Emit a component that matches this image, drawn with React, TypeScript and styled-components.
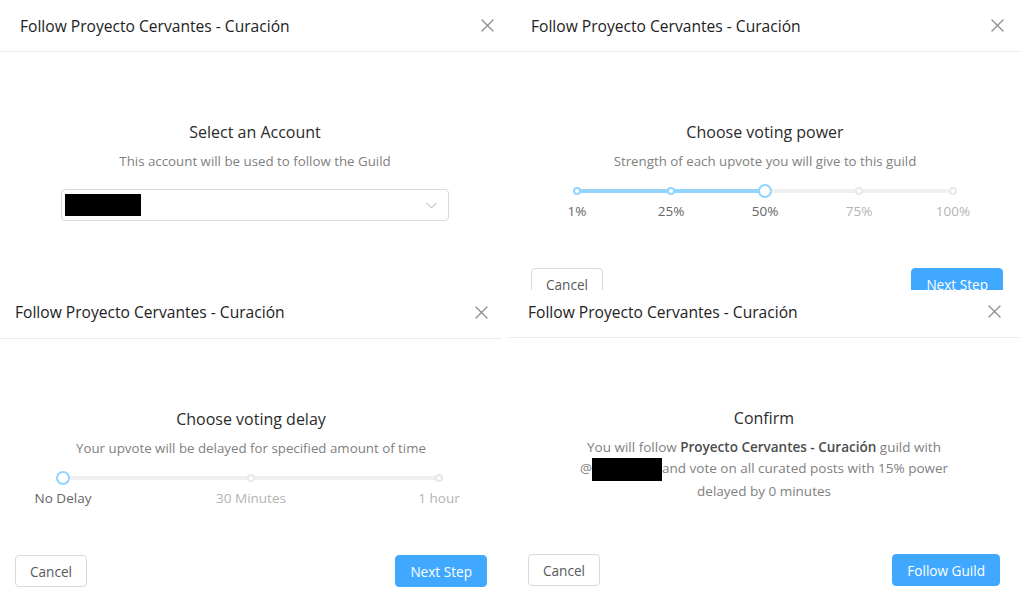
import React from "react"
import styled, { createGlobalStyle } from "styled-components"

const GlobalStyle = createGlobalStyle`
  html, body {
    margin: 0;
    padding: 0;
    background: #fff;
  }
  body {
    font-family: "Open Sans", "Liberation Sans", Arial, sans-serif;
    color: #262626;
    -webkit-font-smoothing: antialiased;
  }
`

// Layout
const Collage = styled.div`
  width: 1020px;
  height: 612px;
  display: flex;
  flex-direction: column;
  overflow: hidden;
  background: #fff;
`
const Row = styled.div<{ $height: number; $gap?: number }>`
  height: ${p => p.$height}px;
  display: flex;
  gap: ${p => p.$gap || 0}px;
  overflow: hidden;
`
const Panel = styled.section<{ $width: number }>`
  width: ${p => p.$width}px;
  flex: none;
  display: flex;
  flex-direction: column;
  background: #fff;
`
const Header = styled.header<{ $height: number; $left: number; $right: number; $lift?: number }>`
  height: ${p => p.$height}px;
  box-sizing: border-box;
  display: flex;
  align-items: center;
  justify-content: space-between;
  padding: 0 ${p => p.$right}px ${p => p.$lift || 0}px ${p => p.$left}px;
  border-bottom: 1px solid #ebebeb;
  flex: none;
`
const Title = styled.div`
  font-size: 15.6px;
  line-height: 22px;
  color: #222;
`
const Close = styled.button`
  width: 16px;
  height: 16px;
  padding: 0;
  border: 0;
  background: none;
  display: flex;
  align-items: center;
  justify-content: center;
  color: #8c8c8c;
  cursor: pointer;
`
const Body = styled.div`
  height: 216px;
  box-sizing: border-box;
  padding-top: 69px;
  display: flex;
  flex-direction: column;
  align-items: center;
  flex: none;
`
const Heading = styled.h3`
  margin: 0;
  font-size: 16px;
  line-height: 22px;
  font-weight: 500;
  color: #2b2b2b;
`
const Sub = styled.p`
  margin: 8px 0 0;
  font-size: 13.3px;
  line-height: 20px;
  color: #7f7f7f;
`
const ConfirmText = styled.p`
  margin: 8px 0 0;
  font-size: 13.5px;
  line-height: 21px;
  color: #7f7f7f;
  text-align: center;
  b { color: #4d4d4d; font-weight: 600; }
`
const Redacted = styled.span<{ $w: number; $h: number }>`
  display: inline-block;
  width: ${p => p.$w}px;
  height: ${p => p.$h}px;
  background: #000;
  vertical-align: middle;
`
const Select = styled.div`
  margin-top: 18px;
  width: 388px;
  height: 32px;
  box-sizing: border-box;
  border: 1px solid #d9d9d9;
  border-radius: 4px;
  display: flex;
  align-items: center;
  justify-content: space-between;
  padding: 0 11px 0 3px;
  color: #c4c4c4;
`

// Slider
const Slider = styled.div<{ $rail: number; $count: number }>`
  margin-top: 13px;
  width: ${p => (p.$rail * p.$count) / (p.$count - 1)}px;
  display: flex;
  flex-direction: column;
  align-items: center;
`
const Track = styled.div<{ $rail: number }>`
  position: relative;
  width: ${p => p.$rail}px;
  height: 14px;
`
const Rail = styled.div`
  position: absolute;
  left: 0;
  right: 0;
  top: 5px;
  height: 4px;
  border-radius: 2px;
  background: #f0f0f0;
`
const Fill = styled.div`
  position: absolute;
  left: 0;
  top: 5px;
  height: 4px;
  border-radius: 2px;
  background: #91d5ff;
`
const Dot = styled.span<{ $active: boolean; $handle: boolean }>`
  position: absolute;
  top: 50%;
  width: ${p => (p.$handle ? 14 : 8)}px;
  height: ${p => (p.$handle ? 14 : 8)}px;
  box-sizing: border-box;
  border-radius: 50%;
  background: #fff;
  border: 2px solid ${p => (p.$active ? "#91d5ff" : "#e8e8e8")};
  transform: translate(-50%, -50%);
`
const Marks = styled.div<{ $count: number }>`
  margin-top: 3px;
  width: 100%;
  display: grid;
  grid-template-columns: repeat(${p => p.$count}, 1fr);
`
const Mark = styled.span<{ $active: boolean }>`
  text-align: center;
  font-size: 13.5px;
  line-height: 20px;
  color: ${p => (p.$active ? "#666" : "#b3b3b3")};
`

// Footer
const Footer = styled.footer<{ $left: number; $right: number }>`
  display: flex;
  justify-content: space-between;
  padding: 0 ${p => p.$right}px 0 ${p => p.$left}px;
`
const Button = styled.button<{ $primary?: boolean }>`
  height: 32px;
  padding: 0 14px;
  border-radius: 4px;
  font-family: inherit;
  font-size: 13.6px;
  cursor: pointer;
  border: 1px solid ${p => (p.$primary ? "#40a9ff" : "#d9d9d9")};
  background: ${p => (p.$primary ? "#40a9ff" : "#fff")};
  color: ${p => (p.$primary ? "#fff" : "#595959")};
`

const CloseIcon = () => (
  <svg width="13" height="13" viewBox="0 0 13 13" fill="none" stroke="currentColor" strokeWidth="1.3" strokeLinecap="round">
    <path d="M1 1 L12 12 M12 1 L1 12" />
  </svg>
)

const ChevronIcon = () => (
  <svg width="11" height="7" viewBox="0 0 11 7" fill="none" stroke="currentColor" strokeWidth="1.1">
    <path d="M0.5 0.8 L5.5 5.8 L10.5 0.8" />
  </svg>
)

type StepSliderProps = { marks: string[]; value: number; rail: number }

const StepSlider: React.FC<StepSliderProps> = ({ marks, value, rail }) => {
  const step = 100 / (marks.length - 1)
  return (
    <Slider $rail={rail} $count={marks.length}>
      <Track $rail={rail}>
        <Rail />
        <Fill style={{ width: `${value * step}%` }} />
        {marks.map((m, i) => (
          <Dot key={m} $active={i <= value} $handle={i === value} style={{ left: `${i * step}%` }} />
        ))}
      </Track>
      <Marks $count={marks.length}>
        {marks.map((m, i) => (
          <Mark key={m} $active={i <= value}>{m}</Mark>
        ))}
      </Marks>
    </Slider>
  )
}

const MODAL_TITLE = "Follow Proyecto Cervantes - Curación"

type StepPanelProps = {
  width: number
  headerH: number
  left: number
  right: number
  lift?: number
  action?: string
  children: React.ReactNode
}

const StepPanel: React.FC<StepPanelProps> = ({ width, headerH, left, right, lift, action, children }) => (
  <Panel $width={width}>
    <Header $height={headerH} $left={left} $right={right - 2} $lift={lift}>
      <Title>{MODAL_TITLE}</Title>
      <Close aria-label="Close"><CloseIcon /></Close>
    </Header>
    <Body>{children}</Body>
    {action && (
      <Footer $left={left} $right={right}>
        <Button>Cancel</Button>
        <Button $primary>{action}</Button>
      </Footer>
    )}
  </Panel>
)

const App: React.FC = () => (
  <>
    <GlobalStyle />
    <Collage>
      <Row $height={290}>
        <StepPanel width={510} headerH={52} left={20} right={17}>
          <Heading>Select an Account</Heading>
          <Sub>This account will be used to follow the Guild</Sub>
          <Select>
            <Redacted $w={76} $h={22} />
            <ChevronIcon />
          </Select>
        </StepPanel>
        <StepPanel width={510} headerH={52} left={21} right={17} action="Next Step">
          <Heading>Choose voting power</Heading>
          <Sub>Strength of each upvote you will give to this guild</Sub>
          <StepSlider marks={["1%", "25%", "50%", "75%", "100%"]} value={2} rail={376} />
        </StepPanel>
      </Row>
      <Row $height={322} $gap={6}>
        <StepPanel width={502} headerH={49} left={15} right={15} lift={4} action="Next Step">
          <Heading>Choose voting delay</Heading>
          <Sub>Your upvote will be delayed for specified amount of time</Sub>
          <StepSlider marks={["No Delay", "30 Minutes", "1 hour"]} value={0} rail={376} />
        </StepPanel>
        <StepPanel width={512} headerH={48} left={20} right={20} lift={4} action="Follow Guild">
          <Heading>Confirm</Heading>
          <ConfirmText>
            You will follow <b>Proyecto Cervantes - Curación</b> guild with
            <br />
            @<Redacted $w={70} $h={23} />and vote on all curated posts with 15% power
            <br />
            delayed by 0 minutes
          </ConfirmText>
        </StepPanel>
      </Row>
    </Collage>
  </>
)

export default App
